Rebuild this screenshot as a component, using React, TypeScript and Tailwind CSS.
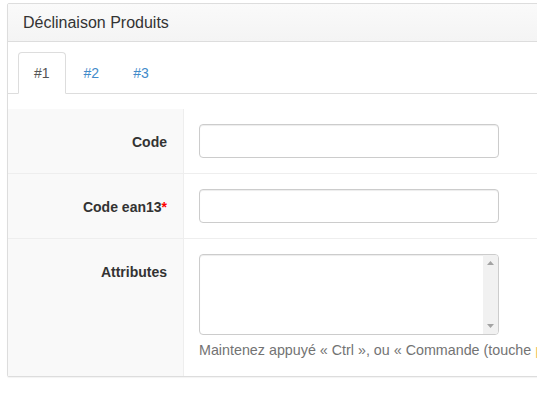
import React from "react";

const tabs = ["#1", "#2", "#3"];

const FormRow = ({
  label,
  required,
  children,
  last,
}: {
  label: string;
  required?: boolean;
  children: React.ReactNode;
  last?: boolean;
}) => (
  <div className={`flex ${last ? "" : "border-b border-[#eeeeee]"}`}>
    <div className="w-[176px] shrink-0 bg-[#f9f9f9] border-r border-[#eeeeee] pr-[16px] pt-[23px] text-right text-[14px] font-bold text-[#333333] leading-[20px]">
      {label}
      {required && <span className="text-[#ff0000]">*</span>}
    </div>
    <div className="flex-1 px-[15px] pt-[15px] pb-[15px]">{children}</div>
  </div>
);

const TextInput = () => (
  <input
    type="text"
    className="block w-[300px] h-[34px] rounded-[4px] border border-[#cccccc] bg-white px-3 outline-none shadow-[inset_0_1px_1px_rgba(0,0,0,0.075)]"
  />
);

const Arrow = ({ up }: { up?: boolean }) => (
  <svg width="7" height="4" viewBox="0 0 7 4">
    <path d={up ? "M0 4 L3.5 0 L7 4 Z" : "M0 0 L3.5 4 L7 0 Z"} fill="#a3a3a3" />
  </svg>
);

const TextArea = () => (
  <div className="flex w-[300px] h-[81px] rounded-[4px] border border-[#cccccc] bg-white overflow-hidden shadow-[inset_0_1px_1px_rgba(0,0,0,0.075)]">
    <textarea className="flex-1 resize-none outline-none bg-transparent px-3 py-1.5" />
    <div className="w-[15px] bg-[#f1f1f1] flex flex-col items-center justify-between py-[6px]">
      <Arrow up />
      <Arrow />
    </div>
  </div>
);

export default function App() {
  return (
    <div
      className="w-[537px] h-[393px] overflow-hidden bg-white pl-[7px] pt-[3px]"
      style={{ fontFamily: '"Liberation Sans", Arial, sans-serif' }}
    >
      <div className="w-[620px] border border-[#dddddd] rounded-[2px] bg-white shadow-[0_1px_1px_rgba(0,0,0,0.05)]">
        <div className="h-[38px] flex items-center px-[15px] bg-gradient-to-b from-[#fafafa] to-[#f4f4f4] border-b border-[#dddddd] text-[16px] text-[#333333]">
          Déclinaison Produits
        </div>
        <div className="pt-[10px]">
          <div className="flex pl-[10px] border-b border-[#dddddd]">
            {tabs.map((t, i) => (
              <div
                key={t}
                className={`mr-[2px] -mb-px px-[15px] py-[10px] text-[14px] leading-[20px] rounded-t-[4px] border ${
                  i === 0
                    ? "border-[#dddddd] border-b-white bg-white text-[#555555]"
                    : "border-transparent text-[#428bca]"
                }`}
              >
                {t}
              </div>
            ))}
          </div>
          <div className="pt-[15px]">
            <FormRow label="Code">
              <TextInput />
            </FormRow>
            <FormRow label="Code ean13" required>
              <TextInput />
            </FormRow>
            <FormRow label="Attributes" last>
              <TextArea />
              <p className="mt-[5px] mb-[1px] text-[14.3px] leading-[20px] text-[#737373] whitespace-nowrap">
                Maintenez appuyé « Ctrl », ou « Commande (touche{" "}
                <span className="text-[#f0c36d]">pomme)</span> » sur un Mac, pour en sélectionner plusieurs.
              </p>
            </FormRow>
          </div>
        </div>
      </div>
    </div>
  );
}
